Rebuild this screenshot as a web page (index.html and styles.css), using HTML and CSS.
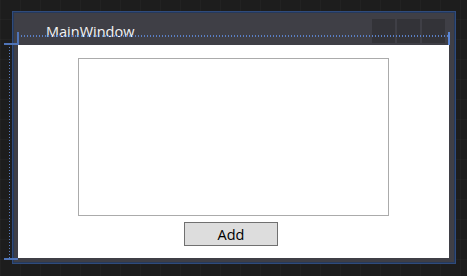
FILE: index.html
```html
<!DOCTYPE html>
<html>
<head>
<meta charset="utf-8">
<link rel="stylesheet" href="styles.css">
</head>
<body>
<div class="stage">
  <div class="window">
    <div class="titlebar">
      <span class="title">MainWindow</span>
      <div class="caption-buttons">
        <div class="cbtn"></div>
        <div class="cbtn"></div>
        <div class="cbtn"></div>
      </div>
    </div>
    <div class="client">
      <div class="listbox"></div>
      <button class="add">Add</button>
    </div>
  </div>
  <div class="adorn h-dotted"></div>
  <div class="adorn v-dotted"></div>
  <div class="adorn h-tick-top"></div>
  <div class="adorn h-tick-bottom"></div>
  <div class="adorn v-tick-left"></div>
  <div class="adorn v-tick-right"></div>
</div>
</body>
</html>
```
FILE: styles.css
```css
html, body {
  margin: 0;
  padding: 0;
  background: #1e1e1e;
}
body {
  width: 467px;
  height: 276px;
  overflow: hidden;
  background-color: #1d1d1d;
  background-image:
    linear-gradient(90deg, rgba(255,255,255,0.025) 1px, transparent 1px),
    linear-gradient(0deg, rgba(255,255,255,0.025) 1px, transparent 1px);
  background-size: 20px 20px;
  font-family: "Open Sans", "Noto Sans", sans-serif;
}
.stage {
  position: relative;
  width: 467px;
  height: 276px;
  padding: 11px 0 0 12px;
  box-sizing: border-box;
}
.window {
  width: 444px;
  height: 253px;
  box-sizing: border-box;
  border: 1px solid #2f4b7c;
  box-shadow: inset 0 0 0 1px #26395a;
  background: #3f3f46;
  padding: 1px 6px 5px 5px;
  display: flex;
  flex-direction: column;
}
.titlebar {
  height: 32px;
  display: flex;
  align-items: flex-start;
  position: relative;
}
.title {
  color: #f4f4f4;
  font-size: 14.5px;
  margin-left: 28px;
  margin-top: 10px;
  line-height: 18px;
}
.caption-buttons {
  margin-left: auto;
  margin-top: 6px;
  margin-right: 4px;
  display: flex;
  gap: 2px;
}
.cbtn {
  width: 23px;
  height: 24px;
  background: #333338;
}
.client {
  flex: 1;
  background: #ffffff;
  display: flex;
  flex-direction: column;
  align-items: flex-start;
  padding-top: 13px;
}
.listbox {
  width: 311px;
  height: 158px;
  box-sizing: border-box;
  border: 1px solid #ababab;
  margin-left: 60px;
}
.add {
  margin-top: 6px;
  margin-left: 166px;
  width: 94px;
  height: 24px;
  box-sizing: border-box;
  border: 1px solid #707070;
  background: #dddddd;
  font-family: "Open Sans", "Noto Sans", sans-serif;
  font-size: 14.5px;
  color: #000;
  padding: 0;
}
.adorn {
  position: absolute;
}
.h-dotted {
  left: 18px;
  top: 35px;
  width: 431px;
  height: 2px;
  background-image: linear-gradient(90deg, #5a7fc4 50%, transparent 50%);
  background-size: 3px 2px;
}
.v-dotted {
  left: 9px;
  top: 45px;
  width: 1px;
  height: 213px;
  background-image: linear-gradient(0deg, #5a7fc4 50%, transparent 50%);
  background-size: 1px 3px;
}
.h-tick-top {
  left: 4px;
  top: 43px;
  width: 14px;
  height: 2px;
  background: #4f74b8;
}
.h-tick-bottom {
  left: 4px;
  top: 258px;
  width: 14px;
  height: 2px;
  background: #4f74b8;
}
.v-tick-left {
  left: 17px;
  top: 32px;
  width: 2px;
  height: 13px;
  background: #4f74b8;
}
.v-tick-right {
  left: 448px;
  top: 32px;
  width: 2px;
  height: 13px;
  background: #5a86d6;
}
```
